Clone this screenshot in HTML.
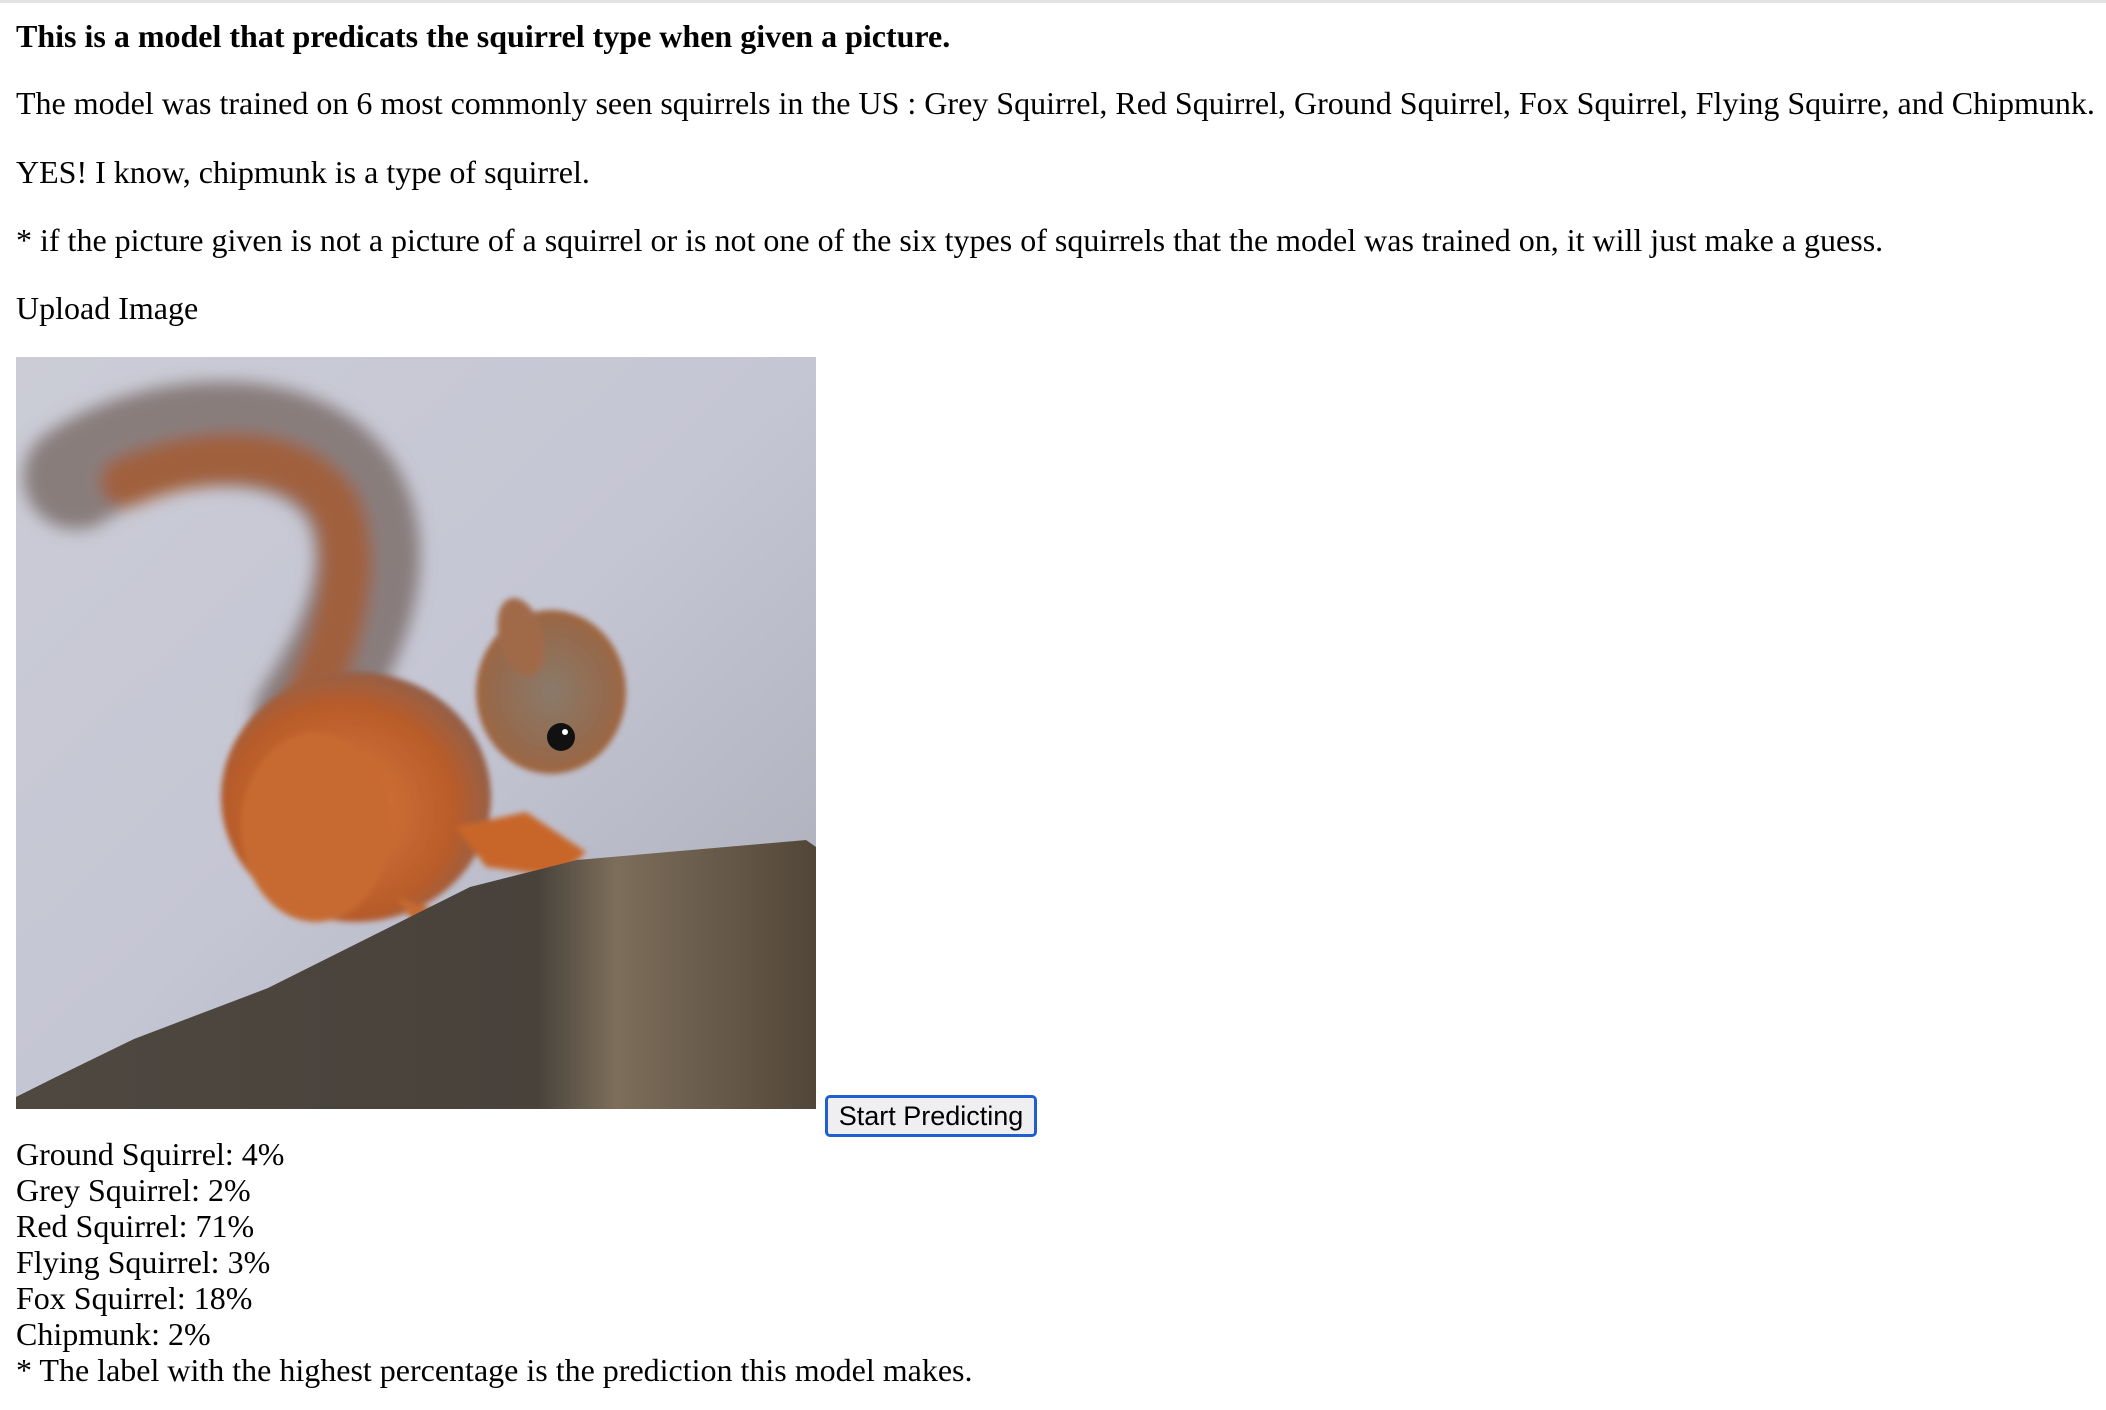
<!DOCTYPE html>
<html><head><meta charset="utf-8"><style>
html,body{margin:0;padding:0;background:#fff;}
body{width:2106px;height:1410px;position:relative;overflow:hidden;font-family:"Liberation Serif",serif;font-size:32px;color:#000;}
.topline{position:absolute;left:0;top:0;width:2106px;height:3px;background:#e3e3e6;}
.l{position:absolute;left:16px;white-space:nowrap;line-height:37px;}
b{font-weight:bold;}
.btn{position:absolute;left:825px;top:1095px;width:206px;height:36px;border:3px solid #1f5fd0;border-radius:5px;background:#efeff1;font-family:"Liberation Sans",sans-serif;font-size:27px;line-height:36px;text-align:center;box-sizing:content-box;}
svg{position:absolute;left:16px;top:357px;}
</style></head><body>
<div class="topline"></div>
<div class="l" style="top:18px"><b>This is a model that predicats the squirrel type when given a picture.</b></div>
<div class="l" style="top:85px">The model was trained on 6 most commonly seen squirrels in the US : Grey Squirrel, Red Squirrel, Ground Squirrel, Fox Squirrel, Flying Squirre, and Chipmunk.</div>
<div class="l" style="top:154px">YES! I know, chipmunk is a type of squirrel.</div>
<div class="l" style="top:222px">* if the picture given is not a picture of a squirrel or is not one of the six types of squirrels that the model was trained on, it will just make a guess.</div>
<div class="l" style="top:290px">Upload Image</div>
<svg width="800" height="752" viewBox="0 0 800 752">
<defs>
<linearGradient id="bg" x1="0" y1="0" x2="1" y2="1"><stop offset="0" stop-color="#cbccd6"/><stop offset="0.5" stop-color="#c5c6d4"/><stop offset="1" stop-color="#a9aab6"/></linearGradient>
<linearGradient id="st" x1="0" y1="0" x2="1" y2="0"><stop offset="0" stop-color="#4e4841"/><stop offset="0.65" stop-color="#48423b"/><stop offset="0.75" stop-color="#7d6e5a"/><stop offset="1" stop-color="#524639"/></linearGradient>
<radialGradient id="bd" cx="0.45" cy="0.55" r="0.6"><stop offset="0" stop-color="#d8783c"/><stop offset="0.7" stop-color="#b85c2a"/><stop offset="1" stop-color="#8a6050"/></radialGradient>
<radialGradient id="hd" cx="0.5" cy="0.5" r="0.6"><stop offset="0" stop-color="#8a7a6a"/><stop offset="0.7" stop-color="#96684a"/><stop offset="1" stop-color="#ad6230"/></radialGradient>
<filter id="b8" filterUnits="userSpaceOnUse" x="-100" y="-100" width="1000" height="952"><feGaussianBlur stdDeviation="8"/></filter>
<filter id="b3" filterUnits="userSpaceOnUse" x="-100" y="-100" width="1000" height="952"><feGaussianBlur stdDeviation="3"/></filter>
</defs>
<rect width="800" height="752" fill="url(#bg)"/>
<g filter="url(#b8)">
<path d="M60 120 C130 70 280 50 335 135 C375 205 335 290 290 360" fill="none" stroke="#7e706c" stroke-width="105" stroke-linecap="round" opacity="0.85"/>
<path d="M110 125 C180 95 280 85 320 150 C345 210 320 290 290 350" fill="none" stroke="#a0603e" stroke-width="50" stroke-linecap="round"/>
</g>
<g filter="url(#b3)">
<ellipse cx="340" cy="440" rx="135" ry="125" fill="url(#bd)"/>
<ellipse cx="300" cy="470" rx="75" ry="95" fill="#c66a30"/>
<ellipse cx="535" cy="335" rx="75" ry="82" fill="url(#hd)"/>
<ellipse cx="505" cy="280" rx="22" ry="40" fill="#a06a48" transform="rotate(-15 505 280)"/>
<path d="M440 470 L510 455 L570 495 L545 520 L470 510 Z" fill="#c8662a"/>
<path d="M380 540 L440 560 L475 600 L425 605 Z" fill="#c46a30"/>
</g>
<circle cx="545" cy="380" r="14" fill="#111"/>
<circle cx="549" cy="375" r="3" fill="#fff"/>
<path d="M0 740 L40 720 L118 682 L252 631 L454 530 L561 503 L790 483 L800 490 L800 752 L0 752 Z" fill="url(#st)"/>
</svg>
<div class="btn">Start Predicting</div>
<div class="l" style="top:1136px;line-height:36px">Ground Squirrel: 4%<br>Grey Squirrel: 2%<br>Red Squirrel: 71%<br>Flying Squirrel: 3%<br>Fox Squirrel: 18%<br>Chipmunk: 2%<br>* The label with the highest percentage is the prediction this model makes.</div>
</body></html>
